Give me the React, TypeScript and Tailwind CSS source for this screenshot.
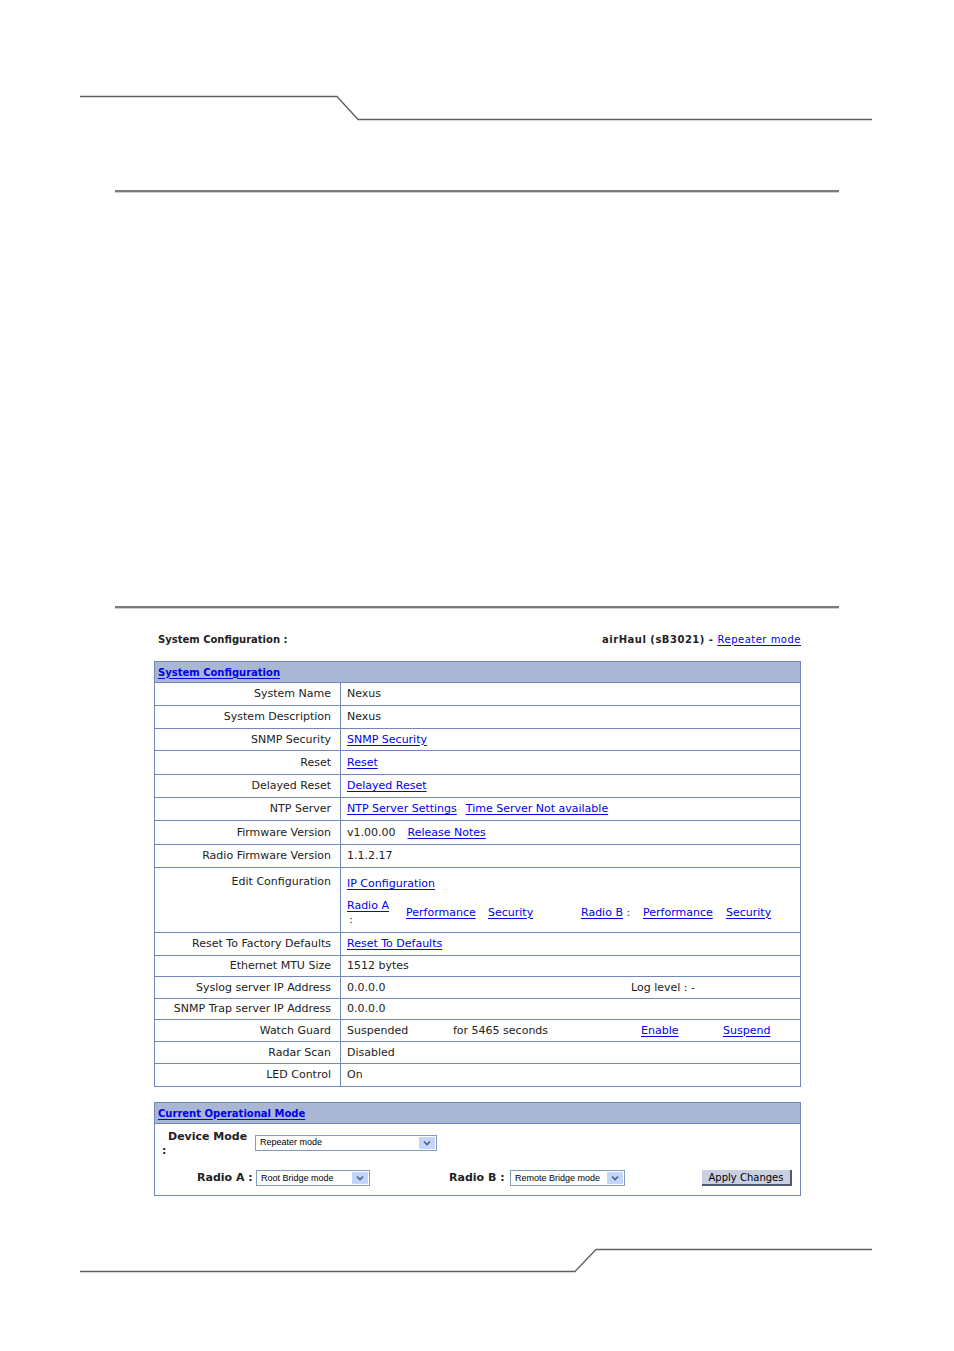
import React from 'react'

const font = { fontFamily: '"DejaVu Sans", Verdana, sans-serif' }

function L({ children }: { children: React.ReactNode }) {
  return <a className="text-[#0000ee] underline underline-offset-2 decoration-1">{children}</a>
}

function Row({ label, h, children }: { label: string; h: number; children?: React.ReactNode }) {
  return (
    <tr style={{ height: h }}>
      <td className="w-[186px] border-t border-r border-[#7187b8] pr-[9px] pt-px text-right align-middle">{label}</td>
      <td className="border-t border-[#7187b8] pl-[6px] pt-px align-middle">{children}</td>
    </tr>
  )
}

function Select({ text, w }: { text: string; w: number }) {
  return (
    <div
      className="flex h-[16px] items-center justify-between border border-[#7f9db9] bg-white pl-[4px] pr-[1px]"
      style={{ width: w }}
    >
      <span className="text-[9px] text-black" style={{ fontFamily: '"Liberation Sans", Arial, sans-serif' }}>
        {text}
      </span>
      <span className="flex h-[12px] w-[16px] items-center justify-center rounded-[1px] bg-[#c4d4fb]">
        <svg width="8" height="6" viewBox="0 0 8 6">
          <path d="M1 1.5 L4 4.5 L7 1.5" fill="none" stroke="#4d6185" strokeWidth="1.6" />
        </svg>
      </span>
    </div>
  )
}

export default function App() {
  return (
    <div className="relative h-[1351px] w-[954px] bg-white text-[11px] text-[#222]" style={font}>
      <div className="pt-[90px]">
        <svg width="954" height="35" viewBox="0 0 954 35" className="block">
          <path d="M80 6.5 H337 L358 29.5 H872" fill="none" stroke="#5f5f5f" strokeWidth="1.3" />
        </svg>
      </div>

      <div className="ml-[115px] mt-[65px] h-[3px] w-[724px] border-t-2 border-b border-t-[#7c7c7c] border-b-[#d2cec6]" />

      <div className="ml-[115px] mt-[413px] h-[3px] w-[724px] border-t-2 border-b border-t-[#7c7c7c] border-b-[#d2cec6]" />

      <div className="ml-[154px] w-[647px]">
        <div className="mt-[23px] flex h-[14px] items-center justify-between pl-[4px] text-[10px]">
          <span className="font-bold">System Configuration :</span>
          <span className="tracking-[0.5px]">
            <span className="font-bold">airHaul (sB3021) - </span>
            <L>Repeater mode</L>
          </span>
        </div>

        <table className="mt-[15px] w-full border-collapse border border-[#7187b8]">
          <tbody>
            <tr className="h-[21px] bg-[#a9b7d4]">
              <td colSpan={2} className="pl-[3px] text-[10px] font-bold">
                <L>System Configuration</L>
              </td>
            </tr>
            <Row label="System Name" h={23}>Nexus</Row>
            <Row label="System Description" h={23}>Nexus</Row>
            <Row label="SNMP Security" h={22}><L>SNMP Security</L></Row>
            <Row label="Reset" h={24}><L>Reset</L></Row>
            <Row label="Delayed Reset" h={23}><L>Delayed Reset</L></Row>
            <Row label="NTP Server" h={23}>
              <span className="flex gap-[9px]">
                <L>NTP Server Settings</L>
                <L>Time Server Not available</L>
              </span>
            </Row>
            <Row label="Firmware Version" h={24}>
              <span className="flex gap-[12px]">
                <span>v1.00.00</span>
                <L>Release Notes</L>
              </span>
            </Row>
            <Row label="Radio Firmware Version" h={23}>1.1.2.17</Row>
            <tr style={{ height: 65 }}>
              <td className="border-t border-r border-[#7187b8] pr-[9px] pt-[6px] text-right align-top">
                Edit Configuration
              </td>
              <td className="border-t border-[#7187b8] pl-[6px] pt-[8px] align-top">
                <div><L>IP Configuration</L></div>
                <div className="mt-[6px] flex items-start">
                  <div className="w-[59px] leading-[14px]">
                    <L>Radio A</L>
                    <div className="pl-[2px]">:</div>
                  </div>
                  <div className="mt-[6px] w-[82px]"><L>Performance</L></div>
                  <div className="mt-[6px] w-[93px]"><L>Security</L></div>
                  <div className="mt-[6px] w-[62px]">
                    <L>Radio B</L> :
                  </div>
                  <div className="mt-[6px] w-[83px]"><L>Performance</L></div>
                  <div className="mt-[6px]"><L>Security</L></div>
                </div>
              </td>
            </tr>
            <Row label="Reset To Factory Defaults" h={23}><L>Reset To Defaults</L></Row>
            <Row label="Ethernet MTU Size" h={21}>1512 bytes</Row>
            <Row label="Syslog server IP Address" h={22}>
              <span className="flex">
                <span className="w-[284px]">0.0.0.0</span>
                <span>Log level : -</span>
              </span>
            </Row>
            <Row label="SNMP Trap server IP Address" h={21}>0.0.0.0</Row>
            <Row label="Watch Guard" h={22}>
              <span className="flex">
                <span className="w-[106px]">Suspended</span>
                <span className="w-[188px]">for 5465 seconds</span>
                <span className="w-[82px]"><L>Enable</L></span>
                <L>Suspend</L>
              </span>
            </Row>
            <Row label="Radar Scan" h={22}>Disabled</Row>
            <Row label="LED Control" h={23}>On</Row>
          </tbody>
        </table>

        <div className="mt-[15px] border border-[#7187b8]">
          <div className="flex h-[21px] items-center border-b border-[#7187b8] bg-[#a9b7d4] pl-[3px] text-[10px] font-bold">
            <L>Current Operational Mode</L>
          </div>
          <div className="px-[7px] pt-[6px] pb-[8px]">
            <div className="flex items-start">
              <div className="w-[93px] font-bold leading-[14px]">
                <div className="pl-[6px]">Device Mode</div>
                <div>:</div>
              </div>
              <div className="mt-[5px]">
                <Select text="Repeater mode" w={182} />
              </div>
            </div>
            <div className="mt-[12px] flex items-center">
              <div className="w-[94px] pl-[35px] font-bold">Radio A :</div>
              <Select text="Root Bridge mode" w={114} />
              <div className="ml-[79px] w-[61px] font-bold">Radio B :</div>
              <Select text="Remote Bridge mode" w={115} />
              <div className="ml-auto mr-[1px] flex h-[16px] w-[90px] items-center justify-center border-r-2 border-b-2 border-r-[#505a6e] border-b-[#505a6e] bg-[#c8d0e2] text-[10px] text-black">
                Apply Changes
              </div>
            </div>
          </div>
        </div>
      </div>

      <div className="mt-[49px]">
        <svg width="954" height="32" viewBox="0 0 954 32" className="block">
          <path d="M80 26.5 H575 L596 4.5 H872" fill="none" stroke="#5f5f5f" strokeWidth="1.3" />
        </svg>
      </div>
    </div>
  )
}
